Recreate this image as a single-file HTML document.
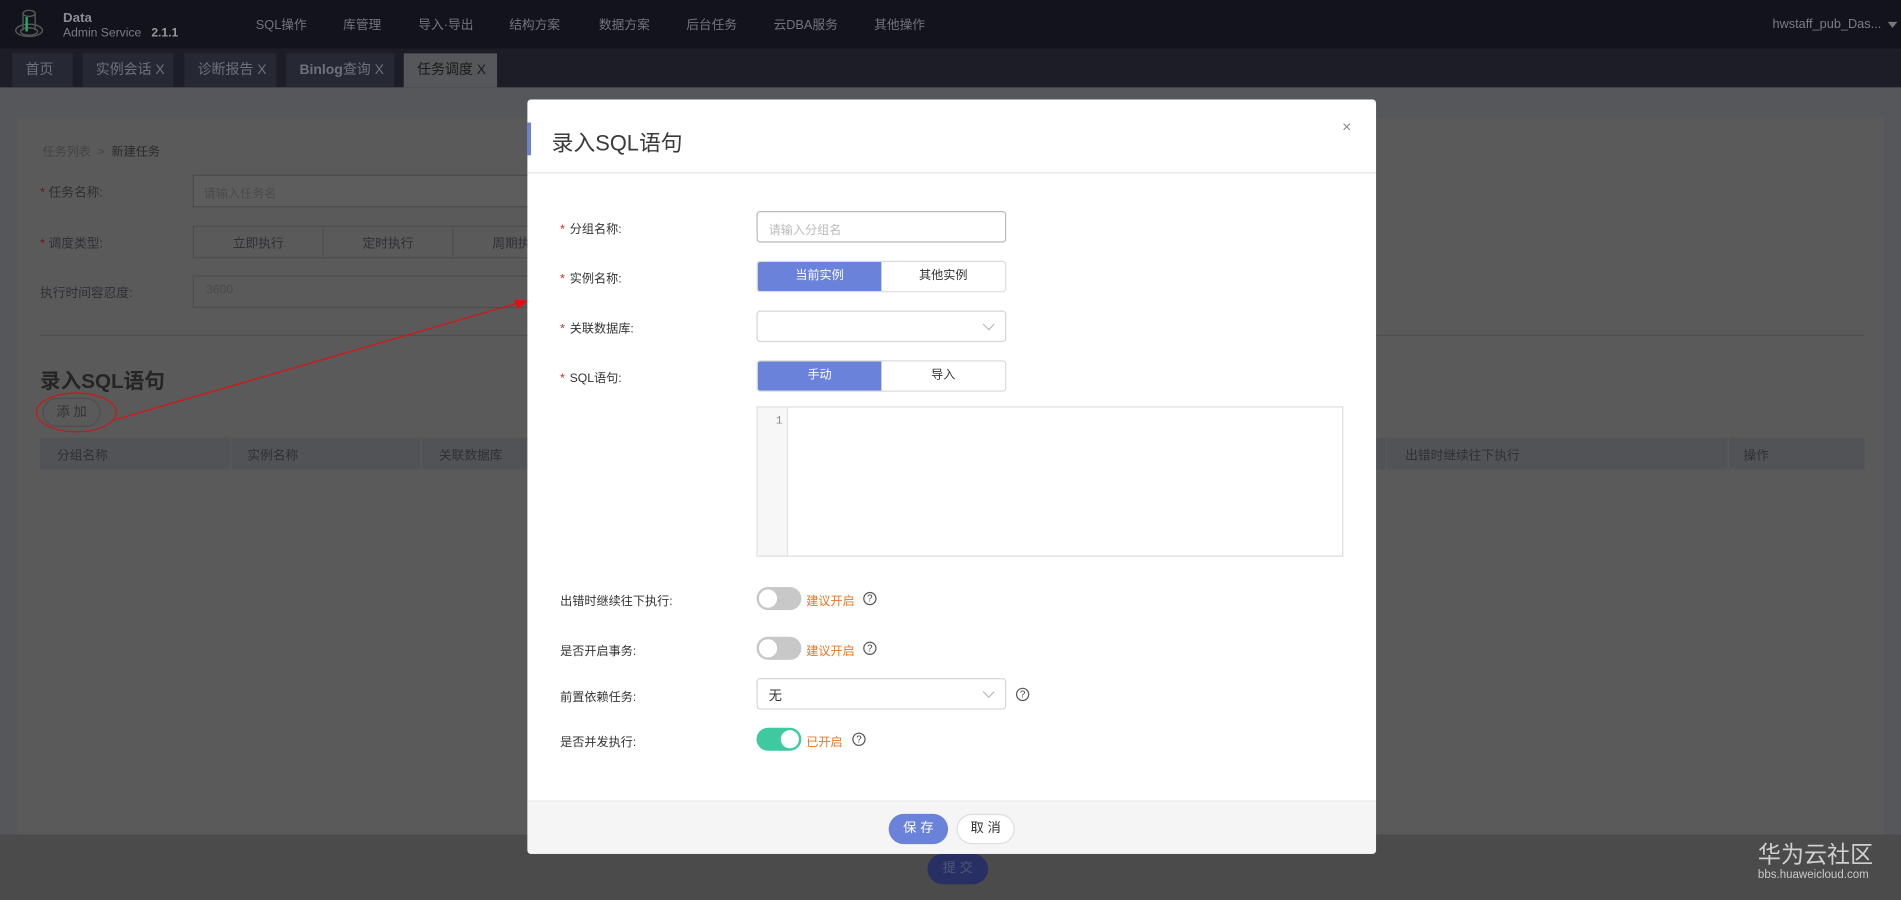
<!DOCTYPE html>
<html><head><meta charset="utf-8"><style>
*{box-sizing:border-box;margin:0;padding:0}
html,body{width:1901px;height:900px;overflow:hidden;background:#58595b}
body{font-family:"Liberation Sans","Noto Sans CJK SC",sans-serif;}
#w{position:absolute;left:0;top:0;width:1568px;height:742px;transform:scale(1.21237,1.2129);transform-origin:0 0;background:#56575a;font-size:11px}
.a{position:absolute}
.nav span{position:absolute;top:13px;color:#72747e;font-size:10.5px}
.tab{position:absolute;top:44px;height:28px;background:#262833;color:#6e707a;font-size:11.5px;line-height:28px;padding-left:11px}
.lbl{position:absolute;left:462px;color:#333;font-size:10px}
.lbl i{color:#e0212a;font-style:normal;margin-right:4px}
.inp{position:absolute;left:624px;width:206px;height:26px;border:1px solid #d5d5d5;border-radius:3px;background:#fff}
.seg{position:absolute;left:624px;width:206px;height:26px;border:1px solid #dcdcdc;border-radius:3px;overflow:hidden;display:flex;font-size:10px;line-height:24px;text-align:center;color:#333}
.seg div{flex:1}
.seg .on{background:#6a82d9;color:#fff}
.tg{position:absolute;left:624px;width:37px;height:19px;border-radius:10px;background:#c8c8c8}
.tg::after{content:"";position:absolute;top:2px;left:2px;width:15px;height:15px;border-radius:50%;background:#fff}
.tg.g{background:#3fc9a0}.tg.g::after{left:20px}
.hint{position:absolute;left:665px;color:#e87722;font-size:10px}
.q{position:absolute;width:11px;height:11px;border:1px solid #555;border-radius:50%;font-size:8px;line-height:9px;text-align:center;color:#444}
.bg{position:absolute;color:#2f3034;font-size:10.5px}
.chev{position:absolute;width:7px;height:7px;border-right:1px solid #bbb;border-bottom:1px solid #bbb;transform:rotate(45deg)}
</style></head><body><div id="w">
<div class="a" style="left:0;top:0;width:1568px;height:40px;background:#12131c"></div>
<svg class="a" style="left:11px;top:6px" width="26" height="28" viewBox="0 0 26 28"><g fill="none" stroke="#555" stroke-width="1.2"><ellipse cx="13" cy="5" rx="5" ry="2.5"/><path d="M8 5v14M18 5v14"/><ellipse cx="13" cy="19" rx="11" ry="5"/><ellipse cx="13" cy="20" rx="7" ry="3"/></g><path d="M11 8v12" stroke="#2a6" stroke-width="2"/></svg>
<div class="a" style="left:52px;top:9px;color:#8a8c96;font-size:11px;font-weight:bold">Data</div>
<div class="a" style="left:52px;top:22px;color:#7a7c86;font-size:10px">Admin Service &nbsp; <b style="color:#999">2.1.1</b></div>
<div class="nav"><span style="left:211px">SQL操作</span><span style="left:283px">库管理</span><span style="left:345px">导入·导出</span><span style="left:420px">结构方案</span><span style="left:494px">数据方案</span><span style="left:566px">后台任务</span><span style="left:638px">云DBA服务</span><span style="left:721px">其他操作</span></div>
<div class="a" style="left:1462px;top:14px;color:#7a7c86;font-size:10.5px">hwstaff_pub_Das...</div>
<div class="a" style="left:1557px;top:18px;border:4px solid transparent;border-top:5px solid #777"></div>
<div class="a" style="left:0;top:40px;width:1568px;height:32px;background:#1c1d27"></div>
<div class="tab" style="left:10px;width:50px">首页</div>
<div class="tab" style="left:68px;width:75px">实例会话 X</div>
<div class="tab" style="left:152px;width:76px">诊断报告 X</div>
<div class="tab" style="left:236px;width:89px;font-weight:bold">Binlog<span style="font-weight:normal">查询 X</span></div>
<div class="tab" style="left:333px;width:77px;background:#56575a;color:#1a1a1a">任务调度 X</div>
<div class="a" style="left:14px;top:97px;width:1540px;height:591px;background:#5a5a5a"></div>
<div class="bg" style="left:35px;top:116px;font-size:10px;color:#444">任务列表 &nbsp;&gt;&nbsp; <span style="color:#2a2a2a">新建任务</span></div>
<div class="bg" style="left:33px;top:151px"><span style="color:#6a1a1a">*</span> 任务名称:</div>
<div class="a" style="left:159px;top:144px;width:290px;height:27px;border:1px solid #4a4a4a;background:#5d5d5d"></div>
<div class="bg" style="left:168px;top:151px;color:#4a4a4a;font-size:10px">请输入任务名</div>
<div class="bg" style="left:33px;top:193px"><span style="color:#6a1a1a">*</span> 调度类型:</div>
<div class="a" style="left:159px;top:186px;width:290px;height:27px;border:1px solid #4e4e4e"></div>
<div class="a" style="left:266px;top:186px;width:1px;height:27px;background:#4e4e4e"></div>
<div class="a" style="left:373px;top:186px;width:1px;height:27px;background:#4e4e4e"></div>
<div class="bg" style="left:192px;top:193px">立即执行</div>
<div class="bg" style="left:299px;top:193px">定时执行</div>
<div class="bg" style="left:406px;top:193px">周期执</div>
<div class="bg" style="left:33px;top:234px">执行时间容忍度:</div>
<div class="a" style="left:159px;top:227px;width:290px;height:27px;border:1px solid #4e4e4e"></div>
<div class="bg" style="left:170px;top:234px;color:#4a4a4a;font-size:10px">3600</div>
<div class="a" style="left:33px;top:276px;width:1505px;height:1px;background:#4f4f4f"></div>
<div class="bg" style="left:33px;top:300px;font-size:17px;font-weight:bold;color:#252525">录入SQL语句</div>
<div class="a" style="left:35px;top:328px;width:48px;height:24px;border:1px solid #4e4e4e;border-radius:12px;color:#333;text-align:center;line-height:22px;font-size:11px">添 加</div>
<div class="a" style="left:33px;top:361px;width:1505px;height:26px;background:#525356"></div>
<div class="a" style="left:190px;top:361px;width:1px;height:26px;background:#5b5b5b"></div>
<div class="a" style="left:347px;top:361px;width:1px;height:26px;background:#5b5b5b"></div>
<div class="a" style="left:1143px;top:361px;width:1px;height:26px;background:#5b5b5b"></div>
<div class="a" style="left:1425px;top:361px;width:1px;height:26px;background:#5b5b5b"></div>
<div class="bg" style="left:47px;top:368px">分组名称</div>
<div class="bg" style="left:204px;top:368px">实例名称</div>
<div class="bg" style="left:362px;top:368px">关联数据库</div>
<div class="bg" style="left:1159px;top:368px">出错时继续往下执行</div>
<div class="bg" style="left:1438px;top:368px">操作</div>
<div class="a" style="left:0;top:688px;width:1568px;height:54px;background:#4b4b4b"></div>
<div class="a" style="left:765px;top:704px;width:50px;height:25px;border-radius:13px;background:#283063;color:#4d5578;text-align:center;line-height:25px">提 交</div>
<div class="a" style="left:1450px;top:690px;color:#d0d0d0;font-size:19px">华为云社区</div>
<div class="a" style="left:1450px;top:716px;color:#c8c8c8;font-size:9.5px">bbs.huaweicloud.com</div>
<svg class="a" style="left:0;top:0" width="1568" height="742"><ellipse cx="63" cy="340" rx="33" ry="16" fill="none" stroke="#c81818" stroke-width="1"/><path d="M95 346 L430 249" stroke="#d11" stroke-width="1"/><path d="M436 248 L424 247 L427 255Z" fill="#d11"/></svg>
<div class="a" style="left:435px;top:82px;width:700px;height:622px;background:#fff;border-radius:3px;overflow:hidden">
 <div class="a" style="left:0;top:60px;width:700px;height:1px;background:#e4e4e4"></div>
 <div class="a" style="left:0;top:19px;width:3px;height:27px;background:#6b82d6"></div>
 <div class="a" style="left:20px;top:22px;font-size:18px;color:#3a3a3a">录入SQL语句</div>
 <div class="a" style="left:672px;top:15px;font-size:13px;color:#888">×</div>
 <div class="a" style="left:0;top:578px;width:700px;height:44px;background:#f5f5f5;border-top:1px solid #e8e8e8"></div>
 <div class="a" style="left:298px;top:589px;width:49px;height:25px;border-radius:13px;background:#6a82d9;color:#fff;text-align:center;line-height:25px;font-size:11px">保 存</div>
 <div class="a" style="left:354px;top:589px;width:48px;height:25px;border-radius:13px;background:#fff;border:1px solid #ddd;color:#333;text-align:center;line-height:23px;font-size:11px">取 消</div>
</div>
<div class="lbl" style="top:180px"><i>*</i>分组名称:</div>
<div class="inp" style="top:174px;border-color:#bbb"></div>
<div class="a" style="left:634px;top:181px;color:#bbb;font-size:10px">请输入分组名</div>
<div class="lbl" style="top:221px"><i>*</i>实例名称:</div>
<div class="seg" style="top:215px"><div class="on">当前实例</div><div>其他实例</div></div>
<div class="lbl" style="top:262px"><i>*</i>关联数据库:</div>
<div class="inp" style="top:256px"></div><div class="chev" style="left:812px;top:264px"></div>
<div class="lbl" style="top:303px"><i>*</i>SQL语句:</div>
<div class="seg" style="top:297px"><div class="on">手动</div><div>导入</div></div>
<div class="a" style="left:624px;top:335px;width:484px;height:124px;border:1px solid #ddd"></div>
<div class="a" style="left:625px;top:336px;width:25px;height:122px;background:#f7f7f7;border-right:1px solid #e4e4e4"></div>
<div class="a" style="left:640px;top:342px;color:#888;font-size:9px;font-family:'Liberation Mono',monospace">1</div>
<div class="lbl" style="top:487px">出错时继续往下执行:</div>
<div class="tg" style="top:484px"></div><div class="hint" style="top:487px">建议开启</div><div class="q" style="left:712px;top:488px">?</div>
<div class="lbl" style="top:528px">是否开启事务:</div>
<div class="tg" style="top:525px"></div><div class="hint" style="top:528px">建议开启</div><div class="q" style="left:712px;top:529px">?</div>
<div class="lbl" style="top:566px">前置依赖任务:</div>
<div class="inp" style="top:559px"></div><div class="a" style="left:634px;top:565px;color:#333;font-size:11px">无</div><div class="chev" style="left:812px;top:567px"></div><div class="q" style="left:838px;top:567px">?</div>
<div class="lbl" style="top:603px">是否并发执行:</div>
<div class="tg g" style="top:600px"></div><div class="hint" style="top:603px">已开启</div><div class="q" style="left:703px;top:604px">?</div>
</div></body></html>
